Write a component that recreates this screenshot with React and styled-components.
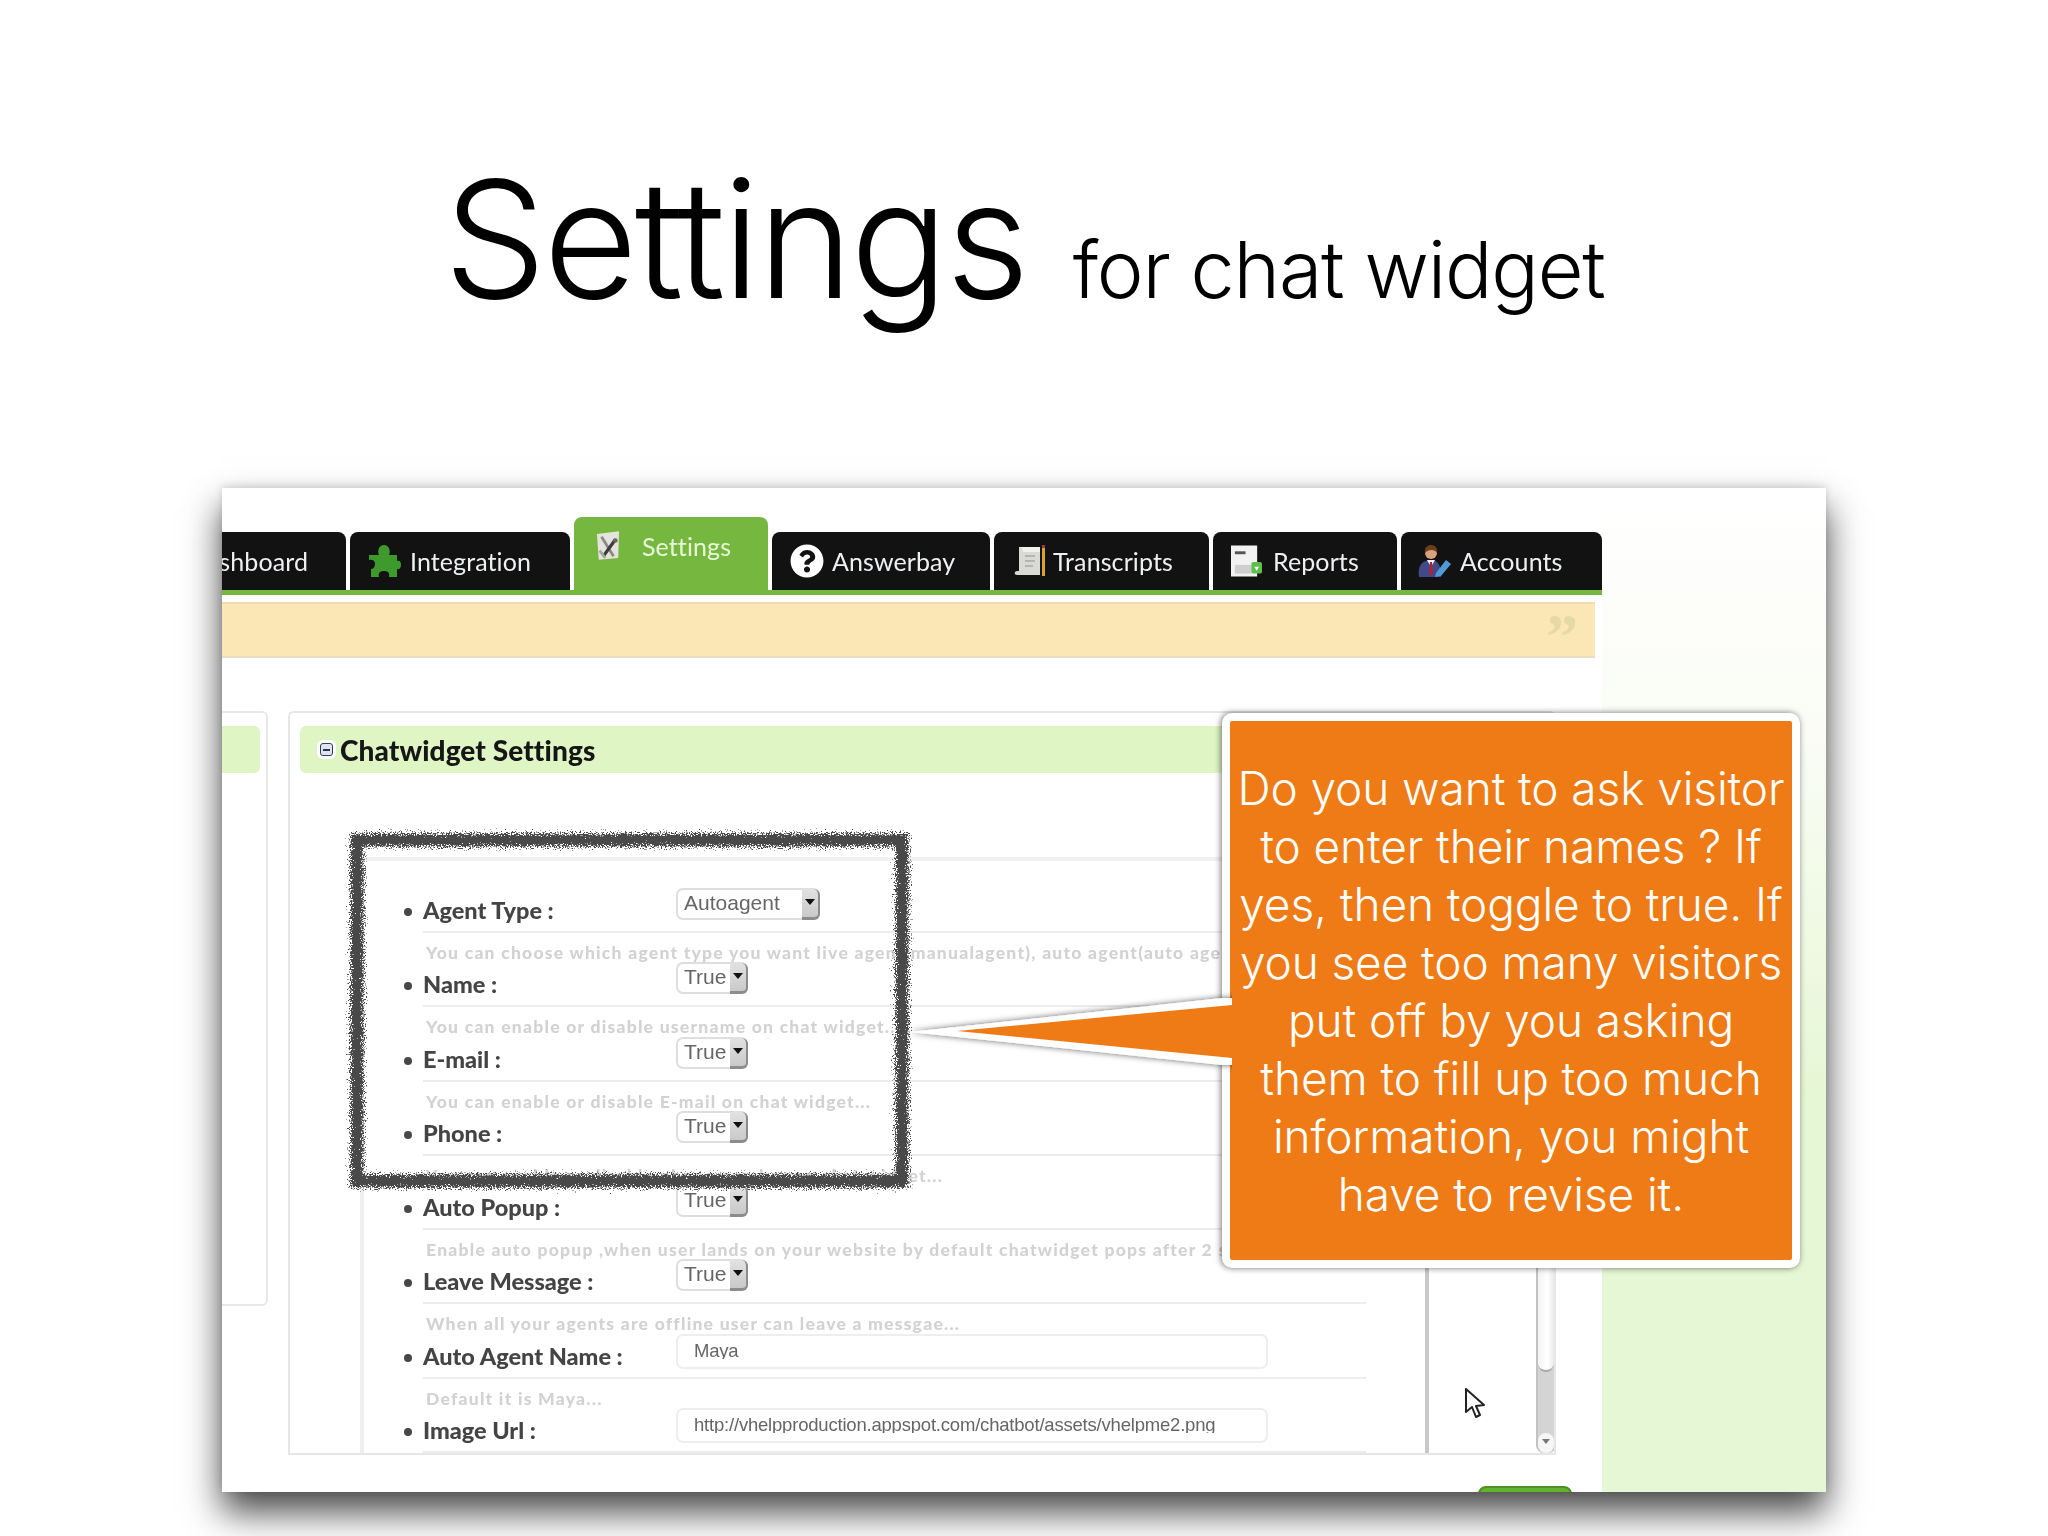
import styled, { createGlobalStyle } from "styled-components";
import { FaQuestionCircle } from "react-icons/fa";

const GlobalStyle = createGlobalStyle`
  html, body {
    margin: 0;
    padding: 0;
    background: #ffffff;
  }
  * {
    box-sizing: border-box;
  }
`;

const Slide = styled.div`
  width: 2048px;
  height: 1536px;
  overflow: hidden;
  background: #ffffff;
`;

const Title = styled.h1`
  margin: 0;
  height: 488px;
  padding-top: 157px;
  display: flex;
  justify-content: center;
  align-items: baseline;
  gap: 46px;
  font-family: Inter, "Liberation Sans", sans-serif;
  font-weight: 300;
  font-feature-settings: "calt" 0, "liga" 0;
  color: #000000;
  line-height: 1;
`;

const TitleMain = styled.span`
  font-size: 163px;
  letter-spacing: -3px;
`;

const TitleSub = styled.span`
  font-size: 79px;
  letter-spacing: -1.2px;
`;

const Frame = styled.div`
  position: relative;
  width: 1604px;
  height: 1004px;
  margin: 0 auto;
  display: flex;
  background: #ffffff;
  box-shadow: 0 20px 34px rgba(0, 0, 0, 0.72), 0 -2px 8px rgba(0, 0, 0, 0.12);
`;

const FrameClip = styled.div`
  width: 100%;
  height: 100%;
  display: flex;
  overflow: hidden;
`;

const Main = styled.div`
  width: 1380px;
  flex: none;
  padding-top: 102px;
  font-family: Lato, "Open Sans", sans-serif;
  filter: blur(0.6px);
`;

const SideStrip = styled.div`
  flex: 1;
  background: linear-gradient(to bottom, #ffffff 0%, #fafcf5 25%, #e6f7d5 60%);
`;

const TabBar = styled.div`
  display: flex;
  align-items: flex-end;
  gap: 4px;
  height: 5px;
  border-bottom: 5px solid #74b83f;
  margin-left: -76px;
  width: 1456px;
`;

const Tab = styled.div`
  flex: none;
  width: ${(p) => p.$w}px;
  height: ${(p) => (p.$active ? 78 : 58)}px;
  margin-bottom: ${(p) => (p.$active ? -5 : 0)}px;
  padding: 13px 0 0 ${(p) => p.$pad}px;
  display: flex;
  align-items: flex-start;
  gap: ${(p) => p.$gap}px;
  background: ${(p) => (p.$active ? "#76b83f" : "#121212")};
  color: ${(p) => (p.$active ? "#e8f8d8" : "#eef0f2")};
  border-radius: 8px 8px 0 0;
  font-size: 25px;
  line-height: 32px;
  letter-spacing: 0.1px;
  white-space: nowrap;
`;

const IconSlot = styled.span`
  flex: none;
  width: ${(p) => p.$w}px;
  height: 32px;
  display: flex;
  align-items: center;
  justify-content: center;
`;

const Notice = styled.div`
  height: 56px;
  margin: 7px 7px 0 0;
  padding-right: 17px;
  display: flex;
  justify-content: flex-end;
  background: #fbe6b6;
  border-top: 2px solid #eedcb0;
  border-bottom: 2px solid #eadcc0;
`;

const QuoteMark = styled.span`
  font-family: "Liberation Serif", serif;
  font-weight: 700;
  font-size: 64px;
  line-height: 66px;
  color: #e6d9a6;
`;

const Panels = styled.div`
  display: flex;
  align-items: flex-start;
  gap: 20px;
  margin-top: 53px;
`;

const SidePanel = styled.div`
  width: 46px;
  height: 595px;
  padding-top: 13px;
  background: #ffffff;
  border: 2px solid #e8e8e8;
  border-left: none;
  border-radius: 0 6px 6px 0;
`;

const SideHeader = styled.div`
  width: 38px;
  height: 47px;
  background: #dff5c4;
  border-radius: 0 6px 6px 0;
`;

const SettingsPanel = styled.div`
  width: 1268px;
  height: 744px;
  display: flex;
  overflow: hidden;
  border: 2px solid #e6e6e8;
  border-radius: 6px 6px 0 0;
`;

const PanelBody = styled.div`
  width: 1246px;
  flex: none;
`;

const PanelHeader = styled.div`
  height: 47px;
  margin: 13px 0 0 10px;
  padding-left: 20px;
  display: flex;
  align-items: center;
  gap: 7px;
  background: #dff5c4;
  border-radius: 6px;
  font-size: 28px;
  line-height: 44px;
  font-weight: 900;
  letter-spacing: 0.1px;
  color: #161616;
`;

const Collapse = styled.span`
  width: 13px;
  height: 13px;
  display: flex;
  align-items: center;
  justify-content: center;
  background: #dfe4ee;
  border: 1px solid #33405c;
  border-radius: 3px;
  box-shadow: 0 0 0 3px #ffffff;
  &::after {
    content: "";
    width: 7px;
    height: 2px;
    background: #2a3550;
  }
`;

const ListBox = styled.div`
  width: 1069px;
  height: 620px;
  margin: 84px 0 0 70px;
  padding: 27px 0 0 59px;
  background: #ffffff;
  border-top: 4px solid #f1f1f1;
  border-left: 4px solid #efeff0;
  border-right: 4px solid #c8c8ca;
`;

const Row = styled.div`
  width: 943px;
  height: 74.25px;
`;

const Field = styled.div`
  height: 45px;
  display: grid;
  grid-template-columns: 253px 1fr;
  align-items: start;
  border-bottom: 2px solid #ececec;
`;

const Label = styled.div`
  position: relative;
  padding-top: 7px;
  font-size: 23.5px;
  line-height: 30px;
  font-weight: 900;
  color: #444444;
  white-space: nowrap;
  &::before {
    content: "";
    position: absolute;
    left: -19px;
    top: 20px;
    width: 8px;
    height: 8px;
    border-radius: 50%;
    background: #484848;
  }
`;

const Select = styled.div`
  width: ${(p) => p.$w}px;
  height: 32px;
  display: flex;
  justify-content: space-between;
  padding-left: 6px;
  background: #ffffff;
  border: 2px solid #dedede;
  border-radius: 7px;
  font-family: "Liberation Sans", Arial, sans-serif;
  font-size: 21px;
  line-height: 26px;
  color: #666666;
`;

const SelectArrow = styled.span`
  width: 18px;
  margin: -1px -2px -2px 0;
  display: flex;
  justify-content: center;
  padding-top: 10px;
  background: linear-gradient(to bottom, #e2e2e2, #c9c9c9);
  border-right: 2px solid #8c8c8c;
  border-bottom: 3px solid #8c8c8c;
  border-radius: 0 6px 6px 0;
  &::after {
    content: "";
    height: 0;
    border-left: 5px solid transparent;
    border-right: 5px solid transparent;
    border-top: 6px solid #111111;
  }
`;

const TextInput = styled.div`
  width: 592px;
  height: 35px;
  padding: 3px 0 0 16px;
  border: 2px solid #eeeeee;
  border-radius: 7px;
  font-family: "Liberation Sans", Arial, sans-serif;
  font-size: 18.5px;
  color: #666666;
  letter-spacing: -0.2px;
`;

const ClippedValue = styled.span`
  display: block;
  height: 20px;
  line-height: 23px;
  overflow: hidden;
  white-space: nowrap;
`;

const Help = styled.div`
  height: 29.25px;
  padding-left: 3px;
  font-size: 17.5px;
  line-height: 39px;
  font-weight: 900;
  letter-spacing: 1.25px;
  color: #d2d2d2;
  white-space: nowrap;
`;

const ScrollBar = styled.div`
  width: 20px;
  flex: none;
  height: 740px;
  display: flex;
  flex-direction: column;
  background: #d4d4d4;
  border-left: 2px solid #c2c2c4;
  border-right: 2px solid #c2c2c4;
  border-radius: 0 0 8px 8px;
`;

const ScrollThumb = styled.div`
  height: 659px;
  background: linear-gradient(to right, #f4f4f4, #ffffff 60%, #e9e9e9);
  border-bottom: 2px solid #a9a9ab;
  border-radius: 0 0 9px 9px;
`;

const ScrollTrack = styled.div`
  flex: 1;
`;

const ScrollButton = styled.div`
  height: 20px;
  display: flex;
  justify-content: center;
  padding-top: 6px;
  background: #f6f6f6;
  border-radius: 8px;
  &::after {
    content: "";
    height: 0;
    border-left: 4px solid transparent;
    border-right: 4px solid transparent;
    border-top: 5px solid #777777;
  }
`;

const Footer = styled.div`
  display: flex;
  justify-content: flex-end;
  padding-right: 30px;
  margin-top: 31px;
`;

const SaveButton = styled.div`
  width: 94px;
  height: 30px;
  background: #62b22e;
  border: 2px solid #4d9025;
  border-radius: 8px 8px 0 0;
`;

const RoughBox = styled.svg`
  position: absolute;
  left: 122px;
  top: 339px;
  width: 571px;
  height: 367px;
  pointer-events: none;
`;

const Callout = styled.div`
  position: absolute;
  left: 1000px;
  top: 225px;
  width: 578px;
  height: 555px;
  display: flex;
  align-items: center;
  justify-content: center;
  background: #ee7b16;
  border: 8px solid #ffffff;
  border-radius: 10px;
  box-shadow: -1px 0 6px rgba(0, 0, 0, 0.55);
  color: #ffffff;
  font-family: Inter, "Liberation Sans", sans-serif;
  font-weight: 280;
  font-size: 46px;
  letter-spacing: -0.1px;
  line-height: 58px;
  text-align: center;
  white-space: nowrap;
`;

const CalloutTail = styled.svg`
  position: absolute;
  left: -320px;
  top: 269px;
  width: 322px;
  height: 84px;
`;

const Cursor = styled.svg`
  position: absolute;
  left: 1243px;
  top: 900px;
  width: 20px;
  height: 30px;
`;

const PuzzleIcon = () => (
  <svg width="34" height="32" viewBox="0 0 34 32">
    <path
      fill="#3f9a2e"
      d="M2 10H12C10 6 12 0 17 0C22 0 24 6 22 10H30V16C33 15 34 17 34 20C34 23 32 25 30 24V32H22C23 28 21 26 17 26C13 26 11 28 12 32H4V24C6 24 8 22 8 19C8 16 6 14 2 15Z"
    />
  </svg>
);

const ToolsIcon = () => (
  <svg width="26" height="32" viewBox="0 0 26 32">
    <polygon points="1,3 25,0 24,29 3,31" fill="#e4e4dc" />
    <path d="M6 6L19 27" stroke="#8a8a86" strokeWidth="3" />
    <path d="M21 9L8 27" stroke="#3c3c3c" strokeWidth="3.5" />
    <path d="M4 21L10 29" stroke="#a5a5a0" strokeWidth="3" />
    <circle cx="21" cy="10" r="2.5" fill="#666" />
  </svg>
);

const ScrollIcon = () => (
  <svg width="34" height="32" viewBox="0 0 34 32">
    <path d="M6 2H27V30H4C1 30 1 26 4 26H6Z" fill="#d9d9d6" />
    <path d="M6 2C8 2 10 3 10 7H27V2Z" fill="#f0f0ee" />
    <path d="M12 11H22M12 16H22M12 21H20" stroke="#b4b4b0" strokeWidth="2" />
    <rect x="29" y="1" width="3" height="30" fill="#d9a22f" />
    <rect x="29" y="0" width="3" height="3" fill="#a33" />
  </svg>
);

const ReportIcon = () => (
  <svg width="32" height="32" viewBox="0 0 32 32">
    <rect x="0" y="0" width="27" height="32" fill="#f2f2f2" />
    <rect x="4" y="6" width="11" height="3" fill="#555" />
    <rect x="4" y="20" width="17" height="9" fill="#cfcfcf" />
    <rect x="21" y="17" width="11" height="12" rx="2" fill="#5cc04a" />
    <path d="M24 22H29L26.5 26Z" fill="#f2fff0" />
  </svg>
);

const AgentIcon = () => (
  <svg width="34" height="32" viewBox="0 0 34 32">
    <path d="M2 32C0 20 6 15 14 15C21 15 24 20 24 32Z" fill="#3f4a86" />
    <path d="M10 15L14 22L18 15Z" fill="#f4f4f4" />
    <path d="M13 17H15L16 28L14 31L12 28Z" fill="#b0203a" />
    <circle cx="14" cy="8" r="6" fill="#d9a27c" />
    <path d="M8 8C7 2 11 0 14 0C18 0 21 3 20 8C18 4 11 4 8 8Z" fill="#6b3f1d" />
    <path d="M19 28L29 15L34 19L24 31L18 32Z" fill="#4f9ad6" />
  </svg>
);

const fieldRows = [
  { label: "Agent Type :", value: "Autoagent", width: 144, help: "You can choose which agent type you want live agent(manualagent), auto agent(auto agent)..." },
  { label: "Name :", value: "True", width: 72, help: "You can enable or disable username on chat widget..." },
  { label: "E-mail :", value: "True", width: 72, help: "You can enable or disable E-mail on chat widget..." },
  { label: "Phone :", value: "True", width: 72, help: "You can enable or disable phone number on chat widget..." },
  { label: "Auto Popup :", value: "True", width: 72, help: "Enable auto popup ,when user lands on your website by default chatwidget pops after 2 seconds..." },
  { label: "Leave Message :", value: "True", width: 72, help: "When all your agents are offline user can leave a messgae..." },
  { label: "Auto Agent Name :", input: "Maya", help: "Default it is Maya..." },
  { label: "Image Url :", input: "http://vhelpproduction.appspot.com/chatbot/assets/vhelpme2.png", help: "" },
];

export default function App() {
  return (
    <Slide>
      <GlobalStyle />
      <Title>
        <TitleMain>Settings</TitleMain>
        <TitleSub>for chat widget</TitleSub>
      </Title>
      <Frame>
        <FrameClip>
          <Main>
            <TabBar>
              <Tab $w={200} $pad={42} $gap={0}>Dashboard</Tab>
              <Tab $w={220} $pad={17} $gap={9}>
                <IconSlot $w={34}><PuzzleIcon /></IconSlot>
                Integration
              </Tab>
              <Tab $w={194} $pad={22} $gap={22} $active>
                <IconSlot $w={24}><ToolsIcon /></IconSlot>
                Settings
              </Tab>
              <Tab $w={218} $pad={18} $gap={8}>
                <IconSlot $w={34}><FaQuestionCircle size={34} color="#ffffff" /></IconSlot>
                Answerbay
              </Tab>
              <Tab $w={215} $pad={19} $gap={6}>
                <IconSlot $w={34}><ScrollIcon /></IconSlot>
                Transcripts
              </Tab>
              <Tab $w={184} $pad={18} $gap={11}>
                <IconSlot $w={31}><ReportIcon /></IconSlot>
                Reports
              </Tab>
              <Tab $w={201} $pad={16} $gap={9}>
                <IconSlot $w={34}><AgentIcon /></IconSlot>
                Accounts
              </Tab>
            </TabBar>
            <Notice>
              <QuoteMark>”</QuoteMark>
            </Notice>
            <Panels>
              <SidePanel>
                <SideHeader />
              </SidePanel>
              <SettingsPanel>
                <PanelBody>
                  <PanelHeader>
                    <Collapse />
                    Chatwidget Settings
                  </PanelHeader>
                  <ListBox>
                    {fieldRows.map((row) => (
                      <Row key={row.label}>
                        <Field>
                          <Label>{row.label}</Label>
                          {row.input ? (
                            <TextInput>
                              <ClippedValue>{row.input}</ClippedValue>
                            </TextInput>
                          ) : (
                            <Select $w={row.width}>
                              {row.value}
                              <SelectArrow />
                            </Select>
                          )}
                        </Field>
                        <Help>{row.help}</Help>
                      </Row>
                    ))}
                  </ListBox>
                </PanelBody>
                <ScrollBar>
                  <ScrollThumb />
                  <ScrollTrack />
                  <ScrollButton />
                </ScrollBar>
              </SettingsPanel>
            </Panels>
            <Footer>
              <SaveButton />
            </Footer>
          </Main>
          <SideStrip />
        </FrameClip>

        <RoughBox viewBox="0 0 571 367">
          <defs>
            <filter id="rough" x="-5%" y="-5%" width="110%" height="110%">
              <feTurbulence type="fractalNoise" baseFrequency="0.8" numOctaves="3" seed="4" result="noise" />
              <feDisplacementMap in="SourceGraphic" in2="noise" scale="16" xChannelSelector="R" yChannelSelector="G" />
            </filter>
          </defs>
          <rect x="13" y="13" width="545" height="341" fill="none" stroke="#484848" strokeWidth="13" filter="url(#rough)" />
        </RoughBox>

        <Callout>
          <CalloutTail viewBox="0 0 322 84">
            <defs>
              <filter id="tailShadow" x="-5%" y="-30%" width="110%" height="160%">
                <feDropShadow dx="-1" dy="0" stdDeviation="3" floodColor="#000" floodOpacity="0.6" />
              </filter>
            </defs>
            <polygon points="0,42 312,8 330,8 330,75 312,75" fill="#ffffff" filter="url(#tailShadow)" />
            <polygon points="47,41 322,15 322,68" fill="#ee7b16" />
          </CalloutTail>
          <div>
            Do you want to ask visitor
            <br />
            to enter their names ? If
            <br />
            yes, then toggle to true. If
            <br />
            you see too many visitors
            <br />
            put off by you asking
            <br />
            them to fill up too much
            <br />
            information, you might
            <br />
            have to revise it.
          </div>
        </Callout>

        <Cursor viewBox="0 0 20 30">
          <path d="M1 1V24L7 19L11 29L15 27L11 18L19 17Z" fill="#ffffff" stroke="#222222" strokeWidth="2" strokeLinejoin="round" />
        </Cursor>
      </Frame>
    </Slide>
  );
}
